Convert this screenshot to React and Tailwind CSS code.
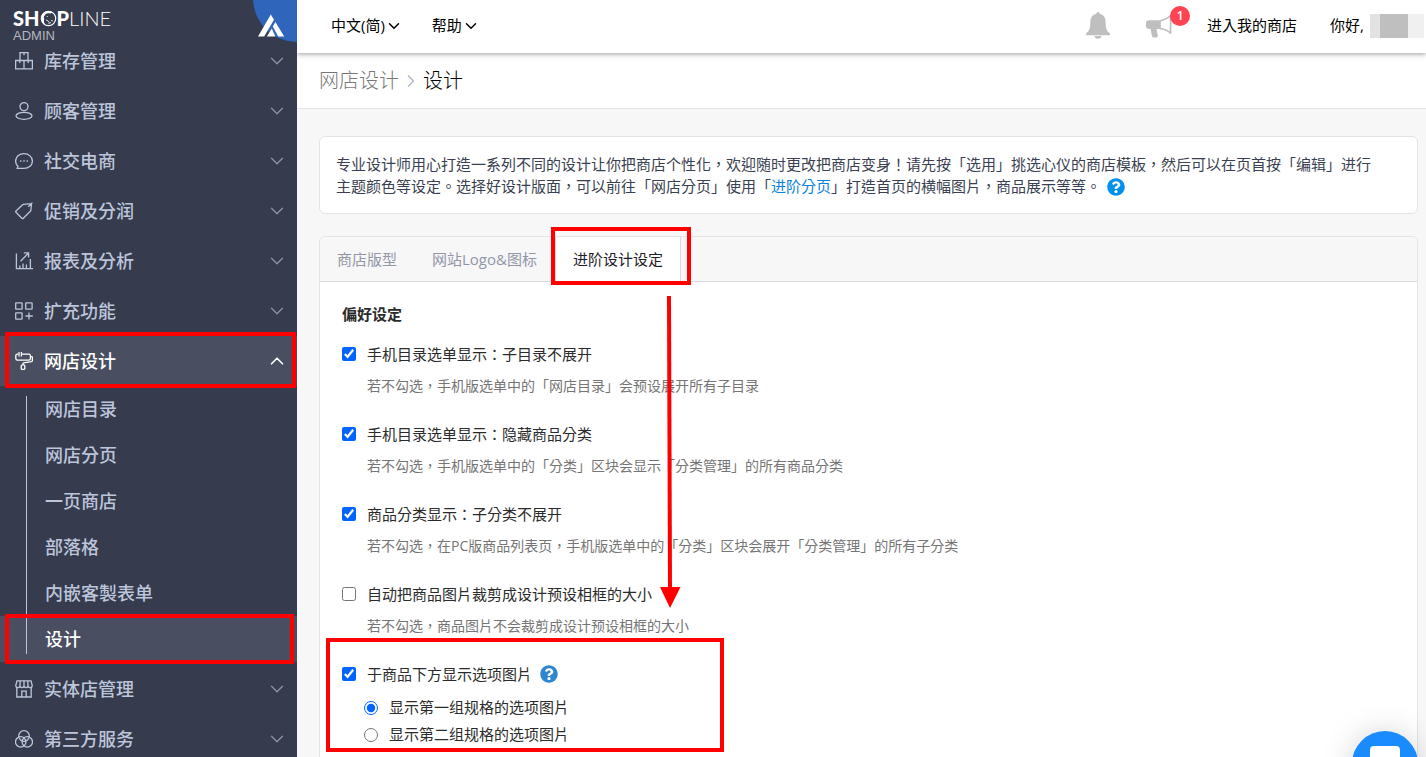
import React, { useState } from 'react';
import { ChevronDown, ChevronUp, ChevronRight } from 'lucide-react';
import { FaQuestionCircle } from 'react-icons/fa';

function Icon({ children }) {
  return (
    <svg viewBox="0 0 18 18" className="w-[18px] h-[18px] shrink-0" fill="none" stroke="currentColor" strokeWidth="1.3" aria-hidden="true">
      {children}
    </svg>
  );
}

const icons = {
  stock: (
    <Icon>
      <path d="M5 8.5V.7h8v7.8M.6 8.5h16.8v8.4H.6zM9 8.5v8.4M9 .7v2.6M4.8 8.5v2.6M13.2 8.5v2.6" />
    </Icon>
  ),
  customer: (
    <Icon>
      <circle cx="9" cy="4.6" r="4" />
      <ellipse cx="9" cy="13.8" rx="8" ry="3.5" />
    </Icon>
  ),
  social: (
    <Icon>
      <path d="M2.2 16.4h6.8c4.8 0 8.4-3.2 8.4-7.3S13.8 1.7 9 1.7.6 4.9.6 9c0 2.1.9 3.9 2.4 5.2z" />
      <path d="M5 9h1.4M8.3 9h1.4M11.6 9H13" strokeWidth="1.5" />
    </Icon>
  ),
  promo: (
    <Icon>
      <path d="M8.2 2.3 1 8.9a1 1 0 0 0 0 1.4l5.8 6a1 1 0 0 0 1.5 0l7.5-7.5.7-7.1zM13.2 4.7 17.4.6" strokeLinejoin="round" />
    </Icon>
  ),
  report: (
    <Icon>
      <path d="M1.4 1.4v15.2H18M4.8 16.5v-3M8 16.5v-5M11.4 16.5v-4M15.4 16.5V7M5.6 9.2l7.2-7.4M8.8.9h4.8v4.6" />
    </Icon>
  ),
  extend: (
    <Icon>
      <rect x=".7" y=".8" width="6.4" height="6.4" rx=".5" />
      <rect x="10.7" y=".8" width="6.4" height="6.4" rx=".5" />
      <rect x=".7" y="10.8" width="6.4" height="6.4" rx=".5" />
      <path d="M14 10.4v7.2M10.4 14h7.4" />
    </Icon>
  ),
  design: (
    <Icon>
      <path d="M3 2.2h-.6C1.400 2.200.8 2.900.8 3.800v2.800c0 .9.6 1.600 1.600 1.600h11.400c1 0 1.600-.7 1.600-1.600V3.800c0-.9-.6-1.600-1.600-1.600H6.600M4 0v4.400M6.400 0v4.400M15.600 4.600h1c.5 0 .8.3.8.8v3.200c0 .6-.3.900-.8 1L8.600 10.800c-.4.1-.6.300-.6.700v1.300" />
      <rect x="6.200" y="12.800" width="3.600" height="4.600" rx="1.200" />
    </Icon>
  ),
  shop: (
    <Icon>
      <path d="M2 .8h14l1.200 4.600c0 1.500-1 2.300-2.200 2.300s-2-.8-2-2.100c0 1.300-.9 2.100-2 2.100S9 6.900 9 5.600c0 1.300-.9 2.100-2 2.100s-2-.8-2-2.100c0 1.300-.9 2.100-2 2.100S.8 6.900.8 5.400zM5.200.8 5 5.600M9 .8v4.800M12.800.8l.2 4.800M1.800 7.600V17h14.400V7.600M6.800 17v-5.800h4.400V17" />
    </Icon>
  ),
  service: (
    <Icon>
      <circle cx="9" cy="6" r="5.300" />
      <circle cx="5.700" cy="11.900" r="5.200" />
      <circle cx="12.300" cy="11.900" r="5.200" />
    </Icon>
  ),
};

const menu = [
  { label: '库存管理', icon: 'stock' },
  { label: '顾客管理', icon: 'customer' },
  { label: '社交电商', icon: 'social' },
  { label: '促销及分润', icon: 'promo' },
  { label: '报表及分析', icon: 'report' },
  { label: '扩充功能', icon: 'extend' },
  {
    label: '网店设计',
    icon: 'design',
    children: ['网店目录', '网店分页', '一页商店', '部落格', '内嵌客製表单', '设计'],
  },
  { label: '实体店管理', icon: 'shop' },
  { label: '第三方服务', icon: 'service' },
];

const settings = [
  { id: 'expand', label: '手机目录选单显示：子目录不展开', hint: '若不勾选，手机版选单中的「网店目录」会预设展开所有子目录', on: true },
  { id: 'hide', label: '手机目录选单显示：隐藏商品分类', hint: '若不勾选，手机版选单中的「分类」区块会显示「分类管理」的所有商品分类', on: true },
  { id: 'subcat', label: '商品分类显示：子分类不展开', hint: '若不勾选，在PC版商品列表页，手机版选单中的「分类」区块会展开「分类管理」的所有子分类', on: true },
  { id: 'crop', label: '自动把商品图片裁剪成设计预设相框的大小', hint: '若不勾选，商品图片不会裁剪成设计预设相框的大小', on: false },
];

// Red frame laid over a highlighted area
function Frame({ className }) {
  return <div className={`absolute z-20 border-4 border-[#ff0000] pointer-events-none ${className}`} />;
}

function Logo() {
  return (
    <div className="relative h-9 shrink-0">
      <svg viewBox="0 0 44 42" className="absolute right-0 top-0 w-11 h-[42px]" aria-hidden="true">
        <circle cx="44" cy="-2" r="44" fill="#2f65bb" />
        <path d="M17.800 14.500 5 36.500h6.200L21 19.800zM22.400 22l-2.600 4.400 5.400 10.100h6zM18.800 28.600l-5 7.900h8.600z" fill="#fff" />
      </svg>
      <a href="#home" aria-label="SHOPLINE ADMIN" className="absolute left-[13px] top-2 block text-white">
        <span className="flex items-center h-5 font-['Lato',sans-serif] text-xl leading-5">
          <span className="font-black">SH</span>
          <svg viewBox="0 0 17 17" className="w-[17px] h-[17px]" aria-hidden="true">
            <circle cx="8.500" cy="8.500" r="7.200" fill="none" stroke="#fff" strokeWidth="1.200" />
            <path d="M8.500 1.300a7.200 7.200 0 0 0-3 13.700c-1.600-2-2-4.300-1.200-6.600L3.600 7.200l1.700-2.600C6.600 3.300 8.600 3 10.500 3.500l1.800-.7a7 7 0 0 0-3.800-1.500z" fill="#fff" />
            <path d="M6.800 6.500h1M6 10l2 .8 1.500 2M8.500 13.500l2.500-1M11 10.500l2 .5" stroke="#fff" strokeWidth=".8" fill="none" />
          </svg>
          <span className="font-black">P</span>
          <span className="font-light">LINE</span>
        </span>
        <span className="block mt-px font-['Liberation_Sans',sans-serif] text-[13px] leading-[14px] text-[#b4b7bf]">ADMIN</span>
      </a>
    </div>
  );
}

function Sidebar() {
  return (
    <aside className="w-[297px] shrink-0 h-full overflow-hidden bg-[#363b4e] text-[#bcc5da] text-[18px] font-medium flex flex-col">
      <Logo />
      <nav className="flex flex-col">
        {menu.map((item) => {
          const open = Boolean(item.children);
          return (
            <div key={item.label}>
              <button
                type="button"
                aria-expanded={open}
                className={`relative flex items-center w-full h-[50px] pl-[15px] pr-[9px] ${open ? 'bg-[#494f60] text-white' : ''}`}
              >
                {icons[item.icon]}
                <span className="ml-[11px]">{item.label}</span>
                {open ? (
                  <ChevronUp size={22} strokeWidth={1.8} className="ml-auto" />
                ) : (
                  <ChevronDown size={22} strokeWidth={1.4} className="ml-auto text-[#8b93a9]" />
                )}
                {open && <Frame className="left-[5px] right-px -top-1 -bottom-0.5" />}
              </button>
              {open && (
                <ul className="relative pb-0.5">
                  <li aria-hidden="true" className="absolute z-10 left-[26px] top-2.5 bottom-2.5 w-px bg-[#bcc5da]" />
                  {item.children.map((child) => {
                    const active = child === '设计';
                    return (
                      <li key={child} className="relative">
                        <a href="#design" className={`flex items-center h-[46px] pl-[45px] ${active ? 'bg-[#494f60] text-white' : ''}`}>
                          {child}
                        </a>
                        {active && <Frame className="left-[5px] right-[3px] -top-0.5 -bottom-0.5" />}
                      </li>
                    );
                  })}
                </ul>
              )}
            </div>
          );
        })}
      </nav>
    </aside>
  );
}

function TopBar() {
  return (
    <header className="relative z-10 flex items-center h-[53px] shrink-0 bg-white pl-[34px] pr-0.5 pb-0.5 text-black shadow-[0_1px_5px_rgba(0,0,0,0.4)]">
      <button type="button" className="flex items-center mr-[29px]">
        中文(简) <ChevronDown size={18} />
      </button>
      <button type="button" className="flex items-center">
        帮助 <ChevronDown size={18} />
      </button>
      <div className="flex items-center ml-auto">
        <button type="button" aria-label="通知" className="mr-9">
          <svg viewBox="0 0 24 27" className="w-6 h-[27px]" fill="#bfbfbf">
            <path d="M12 0c1.100 0 1.500.8 1.600 1.700 3.700.8 6 3.600 6 8 0 6.500 1.100 9.300 4.400 11.800v1.700H0v-1.700c3.300-2.500 4.400-5.300 4.400-11.800 0-4.400 2.300-7.200 6-8C10.500.8 10.900 0 12 0zM8.300 24h7.400c-.4 1.600-1.800 2.700-3.700 2.700S8.700 25.600 8.300 24z" />
          </svg>
        </button>
        <button type="button" aria-label="公告" className="relative mr-[34px]">
          <svg viewBox="0 0 27 24" className="w-[27px] h-6" fill="#bfbfbf">
            <path d="M3 6.200h11V15h-3.500l1.300 6.500c.3 1-.3 1.700-1.300 1.900H7.600c-1 0-1.500-.6-1.700-1.500L4.500 15H3c-1.800 0-3-1.200-3-3V9c0-1.800 1.200-2.800 3-2.800z" />
            <path d="M14 6.800c4-.7 7.600-2.400 10.600-5.300v17.600c-3-2.700-6.600-4.200-10.600-4.600z" fill="#fff" stroke="#bfbfbf" strokeWidth="1.700" strokeLinejoin="round" />
          </svg>
          <span className="absolute -right-[17px] -top-2 w-5 h-5 rounded-full bg-[#ff4350] text-white text-xs leading-5 font-semibold text-center">1</span>
        </button>
        <a href="#store" className="mr-[33px]">进入我的商店</a>
        <span>你好,</span>
        <span className="flex h-6 ml-1.5" aria-hidden="true">
          <span className="w-2.5 bg-[#e2e2e2]" />
          <span className="w-7 bg-[#bfbfbf]" />
          <span className="w-4 bg-[#f0f0f0]" />
        </span>
      </div>
    </header>
  );
}

function Tabs() {
  return (
    <div role="tablist" className="flex gap-px h-[45px] bg-[#f7f7f7] border-b border-[#dcdcdc] rounded-t-md text-[#9296a8]">
      <button type="button" role="tab" aria-selected="false" className="px-[17px]">商店版型</button>
      <button type="button" role="tab" aria-selected="false" className="px-[17px]">网站Logo&amp;图标</button>
      <div className="relative flex">
        <button type="button" role="tab" aria-selected="true" className="px-[17px] h-[45px] bg-white border-x border-[#dcdcdc] text-[#1e2028]">
          进阶设计设定
        </button>
        <Frame className="-left-1 -right-2.5 -top-2.5 -bottom-1" />
        <svg viewBox="0 0 22 312" className="absolute z-20 right-0 top-[59px] w-[22px] h-[312px] pointer-events-none" aria-hidden="true">
          <path d="M10 0 11 292" stroke="#ff0000" strokeWidth="4" />
          <path d="M1 291h20.500L11 312z" fill="#ff0000" />
        </svg>
      </div>
    </div>
  );
}

function Preferences() {
  const [values, setValues] = useState(() => Object.fromEntries(settings.map((s) => [s.id, s.on])));
  const [showOptions, setShowOptions] = useState(true);
  const [group, setGroup] = useState('1');

  const toggle = (id) => setValues((prev) => ({ ...prev, [id]: !prev[id] }));

  return (
    <section className="px-[22px] pt-5 pb-10 text-[#2b2b2b]">
      <h2 className="font-bold leading-6 mb-4">偏好设定</h2>
      {settings.map((s) => (
        <div key={s.id} className="mb-6">
          <label className="flex items-center h-6">
            <input
              type="checkbox"
              checked={values[s.id]}
              onChange={() => toggle(s.id)}
              className="w-3.5 h-3.5 mr-[11px] accent-[#0064ff]"
            />
            {s.label}
          </label>
          <p className="mt-2 pl-[25px] text-sm leading-6 text-[#757575]">{s.hint}</p>
        </div>
      ))}
      <div className="relative">
        <div className="flex items-center h-6">
          <label className="flex items-center">
            <input
              type="checkbox"
              checked={showOptions}
              onChange={() => setShowOptions(!showOptions)}
              className="w-3.5 h-3.5 mr-[11px] accent-[#0064ff]"
            />
            于商品下方显示选项图片
          </label>
          <FaQuestionCircle size={18} className="ml-2 text-[#2f87d0]" />
        </div>
        <div className="mt-2 pl-[22px]">
          {[['1', '显示第一组规格的选项图片'], ['2', '显示第二组规格的选项图片']].map(([value, text]) => (
            <label key={value} className="flex items-center h-[27px]">
              <input
                type="radio"
                name="group"
                value={value}
                checked={group === value}
                onChange={() => setGroup(value)}
                className="w-3.5 h-3.5 mr-[11px] accent-[#0064ff]"
              />
              {text}
            </label>
          ))}
        </div>
        <Frame className="-left-4 -top-6 -bottom-1 w-[398px]" />
      </div>
    </section>
  );
}

export default function App() {
  return (
    <div lang="zh-Hant" className="relative flex h-screen overflow-hidden bg-[#f7f7f7] font-['Open_Sans','Noto_Sans_CJK_TC',sans-serif] text-[15px]">
      <Sidebar />
      <div className="flex-1 min-w-0 h-full flex flex-col overflow-hidden">
        <TopBar />
        <div className="flex items-center gap-0.5 h-14 shrink-0 pl-[22px] bg-white border-b border-[#e4e4e4] text-xl font-light">
          <a href="#web-design" className="text-[#777]">网店设计</a>
          <ChevronRight size={20} className="text-[#b3bcd0]" />
          <h1 className="text-black">设计</h1>
        </div>
        <main className="pl-[22px] pr-2 pt-[27px]">
          <p className="px-4 py-4 leading-[22px] bg-white border border-[#e4e4e4] rounded-md text-[#3a3f51]">
            专业设计师用心打造一系列不同的设计让你把商店个性化，欢迎随时更改把商店变身！请先按「选用」挑选心仪的商店模板，然后可以在页首按「编辑」进行
            <br />
            主题颜色等设定。选择好设计版面，可以前往「网店分页」使用「<a href="#pages" className="text-[#0b82dc]">进阶分页</a>」打造首页的横幅图片，商品展示等等。
            <FaQuestionCircle size={18} className="inline-block ml-1.5 align-[-4px] text-[#0090ee]" />
          </p>
          <div className="mt-[22px] bg-white border border-[#e4e4e4] rounded-md">
            <Tabs />
            <Preferences />
          </div>
        </main>
      </div>
      <button type="button" aria-label="在线客服" className="absolute z-30 right-2 -bottom-10 w-[66px] h-[66px] rounded-full bg-[#1a8cff] shadow-[0_2px_32px_rgba(0,0,0,0.18)] flex justify-center">
        <span className="mt-[15px] w-[30px] h-[34px] rounded bg-white" />
      </button>
    </div>
  );
}
